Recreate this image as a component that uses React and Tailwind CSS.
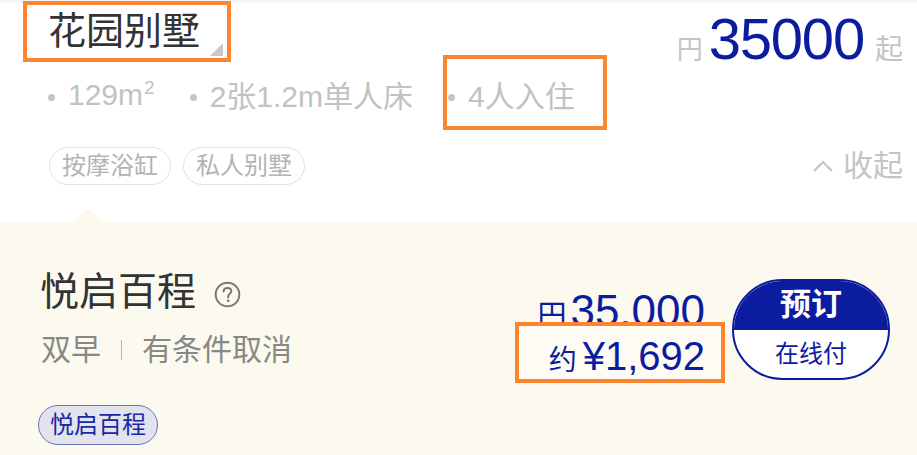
import React from "react";

const FONT = { fontFamily: '"Liberation Sans", "Noto Sans CJK SC", sans-serif' };

function Feature({ children }) {
  return (
    <div className="flex items-center">
      <span className="w-[7px] h-[7px] rounded-full bg-[#c4c4c4] mr-[13px]" />
      <span>{children}</span>
    </div>
  );
}

function Tag({ children }) {
  return (
    <span className="h-[38px] px-[12px] flex items-center rounded-full border border-[#e2e2e2] text-[24px] text-[#b3b3b3]">
      {children}
    </span>
  );
}

export default function App() {
  return (
    <div className="relative w-[917px] h-[455px] overflow-hidden bg-white flex flex-col" style={FONT}>
      {/* --- ROOM HEADER --- */}
      <section className="h-[222px] pl-[48px] pr-[14px] pt-[10px] bg-gradient-to-b from-[#f3f3f3] via-white via-[4px] to-white">
        <div className="h-[58px] flex justify-between items-start">
          <div className="flex items-end">
            <span className="text-[38px] leading-[42px] text-[#333333]">花园别墅</span>
            <svg width="13" height="13" viewBox="0 0 13 13" className="ml-[10px] mb-[-4px]">
              <polygon points="13,0 13,13 0,13" fill="#c9c9c9" />
            </svg>
          </div>
          <div className="flex items-baseline">
            <span className="text-[26px] text-[#c4c4c4] mr-[6px]">円</span>
            <span className="text-[58px] leading-[58px] tracking-[-1.2px] text-[#0c1c9f]">35000</span>
            <span className="text-[28px] text-[#c4c4c4] ml-[11px]">起</span>
          </div>
        </div>

        <div className="mt-[11px] h-[36px] flex items-center gap-[35px] text-[30px] leading-[36px] text-[#c2c2c2]">
          <Feature>
            129m<span className="text-[19px] relative top-[-11px] ml-[1px]">2</span>
          </Feature>
          <Feature>2张1.2m单人床</Feature>
          <Feature>4人入住</Feature>
        </div>

        <div className="mt-[28px] flex items-center justify-between">
          <div className="flex gap-[12px] ml-[1px]">
            <Tag>按摩浴缸</Tag>
            <Tag>私人别墅</Tag>
          </div>
          <div className="flex items-center text-[30px] text-[#c4c4c4]">
            <svg width="22" height="14" viewBox="0 0 22 14" className="mr-[9px]">
              <polyline points="2,12 11,3 20,12" fill="none" stroke="#c4c4c4" strokeWidth="2.2" />
            </svg>
            <span>收起</span>
          </div>
        </div>
      </section>

      {/* --- RATE PLAN --- */}
      <section className="relative flex-1 bg-[#fcf9ee] pl-[38px] pr-[27px] pt-[48px] flex justify-between items-start">
        <svg width="34" height="14" viewBox="0 0 34 14" className="absolute left-[71px] top-[-13px]">
          <polygon points="0,14 17,0 34,14" fill="#fcf9ee" />
        </svg>

        <div className="flex flex-col items-start">
          <div className="flex items-center ml-[2px]">
            <span className="text-[39px] leading-[44px] text-[#333333]">悦启百程</span>
            <svg width="27" height="27" viewBox="0 0 27 27" className="ml-[18px] mt-[5px]">
              <circle cx="13.5" cy="13.5" r="11.8" fill="none" stroke="#777777" strokeWidth="2" />
              <path d="M9.6 10.6 C9.6 8.3 11.3 7 13.5 7 C15.7 7 17.3 8.4 17.3 10.3 C17.3 12.6 14.2 13 14.2 15.6 L14.2 16.4" fill="none" stroke="#777777" strokeWidth="2" strokeLinecap="round" />
              <circle cx="14.2" cy="19.8" r="1.3" fill="#777777" />
            </svg>
          </div>
          <div className="mt-[18px] ml-[3px] flex items-center text-[30px] leading-[36px] text-[#888888]">
            <span>双早</span>
            <span className="w-[1px] h-[20px] bg-[#b5b5b5] mx-[20px]" />
            <span>有条件取消</span>
          </div>
          <span className="mt-[37px] h-[40px] px-[11px] flex items-center rounded-full border border-[#6a72b8] bg-[#e3e3ee] text-[24px] text-[#1a28a3]">
            悦启百程
          </span>
        </div>

        <div className="flex items-start mt-[9px]">
          <div className="flex flex-col items-end mt-[12px] mr-[27px] text-[#0c1c9f]">
            <div className="flex items-baseline leading-[40px]">
              <span className="text-[29px]">円</span>
              <span className="text-[44px] ml-[4px]">35,000</span>
            </div>
            <div className="relative z-10 flex items-baseline leading-[40px]">
              <span className="text-[28px] mr-[6px]">约</span>
              <span className="text-[40px]">¥1,692</span>
            </div>
          </div>
          <button className="w-[158px] h-[101px] rounded-full overflow-hidden border-2 border-[#0c1c9f] flex flex-col bg-white">
            <span className="h-[49px] bg-[#0c1c9f] text-white text-[31px] font-bold flex items-center justify-center">
              预订
            </span>
            <span className="flex-1 text-[#0c1c9f] text-[24px] flex items-center justify-center">
              在线付
            </span>
          </button>
        </div>
      </section>

      {/* --- ANNOTATION BOXES --- */}
      <div className="absolute left-[23px] top-[1px] w-[208px] h-[61px] border-4 border-[#fd8530]" />
      <div className="absolute left-[443px] top-[55px] w-[164px] h-[75px] border-4 border-[#fd8530]" />
      <div className="absolute left-[515px] top-[322px] w-[210px] h-[61px] border-4 border-[#fd8530] bg-[#fdfbf4]" />
    </div>
  );
}
